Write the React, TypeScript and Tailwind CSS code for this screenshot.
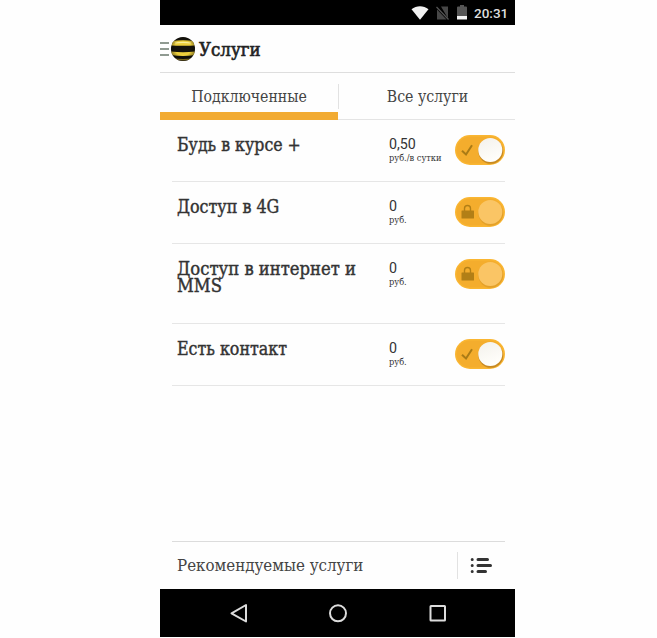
import clsx from "clsx";

type Service = {
  name: string;
  price: string;
  unit: string;
  locked?: boolean;
  height: string;
  scale: string;
};

const SERVICES: Service[] = [
  { name: "Будь в курсе +", price: "0,50", unit: "руб./в сутки", height: "h-[62px]", scale: "scale-x-[0.975]" },
  { name: "Доступ в 4G", price: "0", unit: "руб.", locked: true, height: "h-[62px]", scale: "scale-x-[0.985]" },
  { name: "Доступ в интернет и MMS", price: "0", unit: "руб.", locked: true, height: "h-[80px]", scale: "scale-x-[1.015]" },
  { name: "Есть контакт", price: "0", unit: "руб.", height: "h-[62px]", scale: "scale-x-[0.98]" },
];

function StatusBar() {
  return (
    <div className="flex h-[25px] items-center justify-end bg-black pr-[7px]">
      <svg width="18" height="14" viewBox="0 0 18 14" className="mt-px mr-[7px]">
        <path d="M0.5 3.2C5.5-.8 12.5-.8 17.5 3.2L9 13.8Z" fill="#f1f1f1" />
      </svg>
      <svg width="13" height="14" viewBox="0 0 13 14" className="mr-[8px]">
        <path d="M5 0.5H12V12.5ZM1 3.5L10.5 13.5H1Z" fill="#474747" />
        <path d="M0.5 1L12.5 13.5" stroke="#555" strokeWidth="1.2" />
      </svg>
      <svg width="10" height="15" viewBox="0 0 10 15" className="mr-[7px]">
        <path d="M3 0H7V1.5H9Q10 1.5 10 2.5V11H0V2.5Q0 1.5 1 1.5H3Z" fill="#555" />
        <path d="M0 11H10V14.5H0Z" fill="#f4f4f4" />
      </svg>
      <span className="mt-[2px] w-[34px] font-[Roboto,sans-serif] text-[13.5px] leading-none font-medium whitespace-nowrap text-[#dedede]">20:31</span>
    </div>
  );
}

function Logo() {
  return (
    <svg width="24" height="24" viewBox="0 0 24 24">
      <defs>
        <clipPath id="ball">
          <circle cx="12" cy="12" r="12" />
        </clipPath>
        <radialGradient id="shade" cx="0.5" cy="0.45" r="0.55">
          <stop offset="0.6" stopColor="#000" stopOpacity="0" />
          <stop offset="1" stopColor="#000" stopOpacity="0.45" />
        </radialGradient>
      </defs>
      <g clipPath="url(#ball)">
        <rect width="24" height="24" fill="#15130c" />
        <path d="M0 4Q12 2.6 24 4V8.4Q12 9 0 8.4Z" fill="#edcf3c" />
        <path d="M4 5.4Q12 4.2 20 5.4V6.4Q12 5.6 4 6.4Z" fill="#fbf09a" />
        <path d="M0 14.6Q12 15.8 24 14.6V18Q12 20 0 18Z" fill="#edcf3c" />
        <path d="M2 21Q12 23 22 21V22.4Q12 24.4 2 22.4Z" fill="#b79a2a" />
        <rect width="24" height="24" fill="url(#shade)" />
      </g>
    </svg>
  );
}

function Header() {
  return (
    <header className="flex h-12 items-center border-b border-[#dedede]">
      <div className="flex w-[9px] flex-col gap-1">
        <i className="h-[2px] bg-[#8f9a91]" />
        <i className="h-[2px] bg-[#8f9a91]" />
        <i className="h-[2px] bg-[#8f9a91]" />
      </div>
      <div className="ml-[2px]">
        <Logo />
      </div>
      <h1 className="mt-[3px] ml-1 text-[18.5px] leading-none whitespace-nowrap text-[#222] [-webkit-text-stroke:0.6px]">Услуги</h1>
    </header>
  );
}

function Tabs() {
  return (
    <nav className="flex h-[47px] border-b border-[#e4e4e4] text-[16px] leading-none text-[#444]">
      <div className="flex h-[47px] w-[178px] flex-col items-center">
        <span className="flex h-[39px] scale-x-[0.98] items-center pt-[9px]">Подключенные</span>
        <div className="h-2 w-full shrink-0 bg-[#f2ab32]" />
      </div>
      <div className="mt-[11px] h-[25px] w-px bg-[#e2e2e2]" />
      <div className="flex h-[39px] flex-1 items-center justify-center pt-[9px]">
        <span className="scale-x-[0.98]">Все услуги</span>
      </div>
    </nav>
  );
}

function Toggle({ locked }: { locked?: boolean }) {
  return (
    <svg width="52" height="32" viewBox="0 0 52 32" className="-m-px shrink-0">
      <defs>
        <linearGradient id="knob" x1="0" y1="0" x2="0.4" y2="1">
          <stop offset="0" stopColor="#f3f1ec" />
          <stop offset="1" stopColor="#fffefa" />
        </linearGradient>
      </defs>
      <rect x="1" y="1" width="50" height="30" rx="15" fill="#fab632" />
      <rect x="2.5" y="2.5" width="47" height="27" rx="13.5" fill="#f4ad2d" />
      {locked ? (
        <>
          <rect x="7.5" y="14.5" width="12.5" height="8" rx="0.5" fill="#b27f16" />
          <path d="M10.5 15V12.5a3 3 0 0 1 6 0V15" fill="none" stroke="#b27f16" strokeWidth="1.4" />
        </>
      ) : (
        <path d="M8 16.7L12 20.5L18 11.2" fill="none" stroke="#aa7b16" strokeWidth="2" />
      )}
      <circle cx="36.8" cy="17.4" r="12.4" fill="#a8711b" opacity={locked ? 0.22 : 0.6} />
      <circle cx="36.3" cy="16" r="12" fill={locked ? "#fac565" : "url(#knob)"} />
    </svg>
  );
}

function ServiceRow({ name, price, unit, locked, height, scale }: Service) {
  return (
    <li className={clsx("flex border-b border-[#e6e6e6] pt-[15px] pl-[5px]", height)}>
      <div className="w-[213px]">
        <h2 className={clsx("w-[200px] origin-left pt-px text-[18px] leading-[17px] text-[#333] [-webkit-text-stroke:0.4px]", scale)}>{name}</h2>
      </div>
      <div className="w-[66px] text-[#333]">
        <div className="origin-left scale-x-[0.92] pt-[2px] font-[Roboto,sans-serif] text-[15.5px] leading-[14px]">{price}</div>
        <div className="origin-left scale-x-[1.02] pt-[3px] text-[9px] leading-none whitespace-nowrap">{unit}</div>
      </div>
      <Toggle locked={locked} />
    </li>
  );
}

function Recommended() {
  return (
    <div className="mr-[10px] ml-3 flex h-12 items-center border-t border-[#dcdcdc] pl-[5px]">
      <div className="w-[280px]">
        <span className="inline-block origin-left scale-x-[0.985] text-[17px] leading-none whitespace-nowrap text-[#444]">Рекомендуемые услуги</span>
      </div>
      <div className="h-[27px] w-px bg-[#e2e2e2]" />
      <svg width="22" height="17" viewBox="0 0 22 17" className="ml-3 shrink-0" stroke="#333" strokeWidth="3" strokeLinecap="round">
        <path d="M2.2 2.5h.01M8 2.5h9.5M2.2 8.5h.01M8 8.5h12.5M2.2 14.5h.01M8 14.5h7.5" />
      </svg>
    </div>
  );
}

function NavBar() {
  return (
    <div className="h-[48px] bg-black">
      <svg width="355" height="48" viewBox="0 0 355 48" fill="none" stroke="#dcdcdc" strokeWidth="2">
        <path d="M71.5 24.3L86 16V32.5Z" strokeLinejoin="round" />
        <circle cx="178" cy="24.3" r="8" />
        <rect x="270.5" y="17" width="14.5" height="14.5" rx="0.5" />
      </svg>
    </div>
  );
}

export default function App() {
  return (
    <main className="h-[638px] w-[657px] overflow-hidden bg-[#fefefe]">
      <div className="ml-[160px] flex h-[637px] w-[355px] flex-col font-['DejaVu_Serif_Condensed','DejaVu_Serif',serif]">
        <StatusBar />
        <Header />
        <Tabs />
        <ul className="mr-[10px] ml-3 flex-1">
          {SERVICES.map((service) => (
            <ServiceRow key={service.name} {...service} />
          ))}
        </ul>
        <Recommended />
        <NavBar />
      </div>
    </main>
  );
}
